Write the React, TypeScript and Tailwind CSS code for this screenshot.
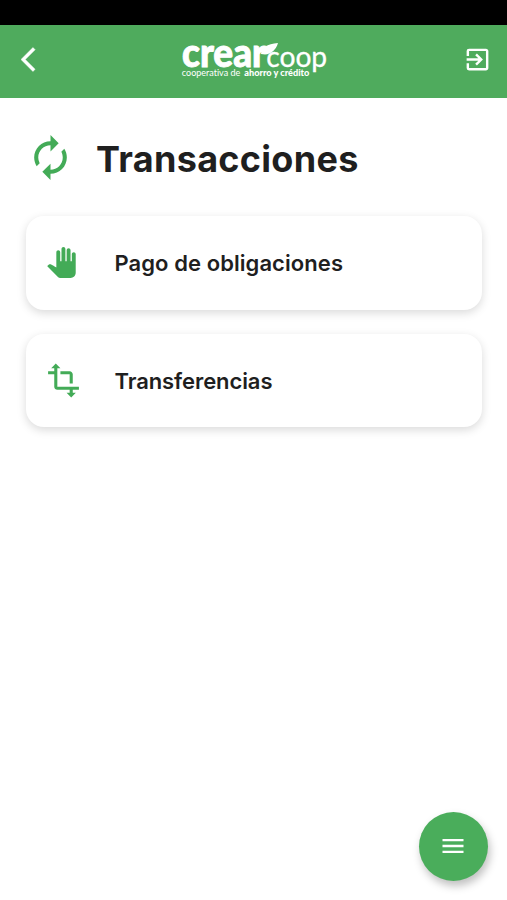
import type { ReactNode } from "react";
import { MdAutorenew, MdExitToApp, MdMenu, MdTransform } from "react-icons/md";

function Logo() {
    return (
        <svg
            width="150"
            height="64"
            viewBox="0 0 150 64"
            fill="white"
            role="img"
            aria-label="crearcoop"
            className="overflow-visible font-[Lato,sans-serif] [font-variant-ligatures:none]"
        >
            <text
                x="1"
                y="36.8"
                fontSize="39"
                fontWeight="900"
                stroke="white"
                strokeWidth="0.9"
                textLength="84"
                lengthAdjust="spacingAndGlyphs"
            >
                crear
            </text>
            <path d="M80 24C80 17 86 14.5 97 13C95 20 90 24 84 24.5Z" />
            <text
                x="85.2"
                y="36.8"
                fontSize="28.5"
                fontWeight="400"
                stroke="white"
                strokeWidth="0.3"
                textLength="61"
                lengthAdjust="spacingAndGlyphs"
            >
                coop
            </text>
            <text x="0.8" y="45.5" fontSize="8.8" fontWeight="400" textLength="58.5" lengthAdjust="spacingAndGlyphs">
                cooperativa de
            </text>
            <text x="63.3" y="45.5" fontSize="8.8" fontWeight="900" textLength="65" lengthAdjust="spacingAndGlyphs">
                ahorro y crédito
            </text>
        </svg>
    );
}

function BackIcon() {
    return (
        <svg width="29" height="29" viewBox="0 0 24 24" fill="currentColor" stroke="currentColor" strokeWidth="0.4">
            <path d="M11.67 3.87 9.9 2.1 0 12l9.9 9.9 1.77-1.77L3.54 12z" />
        </svg>
    );
}

function HandIcon() {
    return (
        <svg width="31" height="31" viewBox="0 0 24 24" fill="currentColor">
            <path d="M23 5.5V20c0 2.2-1.8 4-4 4h-7.3c-1.08 0-2.1-.43-2.85-1.19L1 14.83s1.26-1.23 1.3-1.25c.22-.19.49-.29.79-.29.22 0 .42.06.6.16.04.01 4.31 2.46 4.31 2.46V4c0-.83.67-1.5 1.5-1.5S11 3.17 11 4v7h1V1.5c0-.83.67-1.5 1.5-1.5S15 .67 15 1.5V11h1V2.5c0-.83.67-1.5 1.5-1.5s1.5.67 1.5 1.5V11h1V5.5c0-.83.67-1.5 1.5-1.5s1.5.67 1.5 1.5z" />
        </svg>
    );
}

function Header() {
    return (
        <header className="flex h-[73px] items-center justify-between bg-[#4fab5d] pr-[15px] pl-[20.5px] text-white">
            <button type="button" aria-label="Volver" className="-mt-1 w-[28.5px]">
                <BackIcon />
            </button>
            <Logo />
            <button type="button" aria-label="Salir" className="-mt-1">
                <MdExitToApp size={29} />
            </button>
        </header>
    );
}

function ActionCard({ icon, children }: { icon: ReactNode; children: ReactNode }) {
    return (
        <button
            type="button"
            className="flex h-[93.5px] w-full items-center rounded-[18px] bg-white pl-[19px] text-left shadow-[0_3px_10px_rgba(0,0,0,0.15)]"
        >
            <span className="flex w-[69.5px] shrink-0 text-[#43ab57]">{icon}</span>
            {children}
        </button>
    );
}

export default function App() {
    return (
        <div className="flex h-[900px] w-[507px] flex-col bg-white font-[Inter,sans-serif] text-[#1f1f1f]">
            <div className="h-[25px] bg-black" />
            <Header />

            <main className="flex flex-1 flex-col pr-[25px] pl-[26px]">
                <div className="flex h-[118px] items-center">
                    <MdAutorenew size={49} className="text-[#43ab57]" />
                    <h1 className="ml-[21px] pt-[3px] text-[36px] font-bold tracking-[0.3px] whitespace-nowrap">
                        Transacciones
                    </h1>
                </div>

                <div className="flex flex-col gap-6">
                    <ActionCard
                        icon={
                            <span className="ml-px">
                                <HandIcon />
                            </span>
                        }
                    >
                        <span className="pt-0.5 text-[22px] font-semibold tracking-[0.07px]">Pago de obligaciones</span>
                    </ActionCard>
                    <ActionCard icon={<MdTransform size={37} />}>
                        <span className="pt-0.5 text-[22px] font-semibold tracking-[-0.08px]">Transferencias</span>
                    </ActionCard>
                </div>

                <button
                    type="button"
                    aria-label="Menú"
                    className="mt-auto mr-[-6px] mb-[19px] flex size-[69px] items-center justify-center self-end rounded-full bg-[#4aad5b] pr-px pb-px text-white shadow-[2px_5px_9px_rgba(0,0,0,0.25)]"
                >
                    <MdMenu size={28} />
                </button>
            </main>
        </div>
    );
}
